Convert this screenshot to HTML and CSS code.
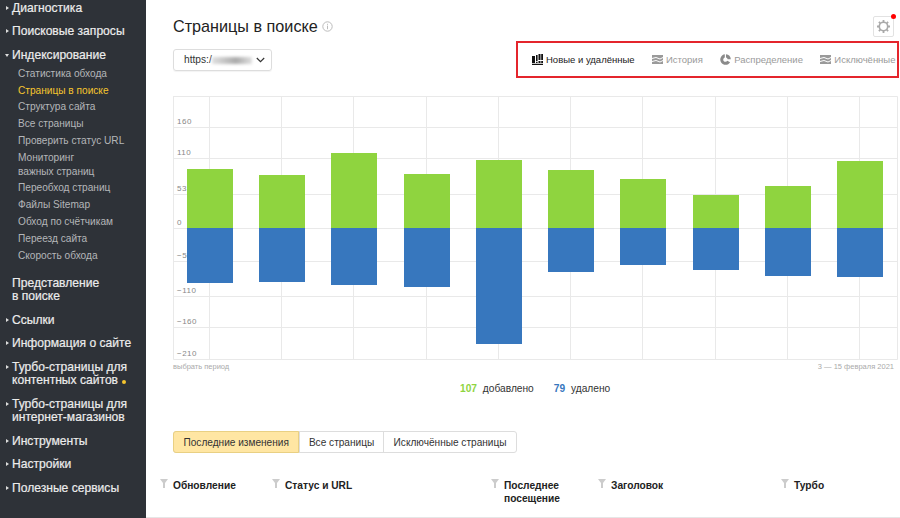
FILE: index.html
```html
<!DOCTYPE html>
<html>
<head>
    <title>Страницы в поиске</title>
    <link rel="stylesheet" href="styles.css">
</head>
<body>
    <nav class="sidebar">
        <ul class="nav">
            <li class="nav-item has-arrow">Диагностика</li>
            <li class="nav-item has-arrow">Поисковые запросы</li>
            <li class="nav-item has-arrow open">Индексирование
                <ul class="subnav">
                    <li>Статистика обхода</li>
                    <li class="active">Страницы в поиске</li>
                    <li>Структура сайта</li>
                    <li>Все страницы</li>
                    <li>Проверить статус URL</li>
                    <li>Мониторинг<br>важных страниц</li>
                    <li>Переобход страниц</li>
                    <li>Файлы Sitemap</li>
                    <li>Обход по счётчикам</li>
                    <li>Переезд сайта</li>
                    <li>Скорость обхода</li>
                </ul>
            </li>
            <li class="nav-item">Представление<br>в поиске</li>
            <li class="nav-item has-arrow">Ссылки</li>
            <li class="nav-item has-arrow">Информация о сайте</li>
            <li class="nav-item has-arrow">Турбо-страницы для<br>контентных сайтов <span class="dot"></span></li>
            <li class="nav-item has-arrow">Турбо-страницы для<br>интернет-магазинов</li>
            <li class="nav-item has-arrow">Инструменты</li>
            <li class="nav-item has-arrow">Настройки</li>
            <li class="nav-item has-arrow">Полезные сервисы</li>
        </ul>
    </nav>

    <main class="content">
        <div class="head">
            <h1>Страницы в поиске</h1>
            <svg class="info" width="11" height="11" viewBox="0 0 11 11">
                <circle cx="5.5" cy="5.5" r="4.7" fill="none" stroke="#bbb"/>
                <rect x="5" y="4.6" width="1" height="3.6" fill="#bbb"/>
                <rect x="5" y="2.8" width="1" height="1" fill="#bbb"/>
            </svg>
            <div class="gear">
                <svg width="15" height="15" viewBox="0 0 15 15">
                    <circle cx="7.5" cy="7.5" r="4.2" fill="none" stroke="#a9a9a9" stroke-width="1.6"/>
                    <path d="M7.5 1v2M7.5 12v2M1 7.5h2M12 7.5h2M2.9 2.9l1.4 1.4M10.7 10.7l1.4 1.4M2.9 12.1l1.4-1.4M10.7 4.3l1.4-1.4" stroke="#a9a9a9" stroke-width="1.8"/>
                </svg>
                <span class="gear-dot"></span>
            </div>
        </div>

        <div class="toolbar">
            <div class="select">
                <span>https:/</span>
                <span class="blurred"></span>
                <svg width="9" height="6" viewBox="0 0 9 6">
                    <path d="M.8 1l3.7 3.6L8.200 1" fill="none" stroke="#333" stroke-width="1.200"/>
                </svg>
            </div>
            <div class="views">
                <div class="view current">
                    <svg width="11" height="11" viewBox="0 0 11 11">
                        <path d="M0 2h3v7H0zM4 1h1.600v6H4zM4 7.800h1.600V9H4zM6.500 0h2v6h-2zM6.500 7h2v2h-2zM9.200 0H11v6H9.200zM9.200 7H11v2H9.200zM0 9.800h11V11H0z" fill="#111"/>
                    </svg>
                    Новые и удалённые
                </div>
                <div class="view">
                    <svg width="11" height="11" viewBox="0 0 11 11">
                        <path d="M0 1h11v2l-3 1.500L4 3 0 4zM0 5l4-1 4 1.500L11 4v2L8 7.500 4 6 0 7zM0 8l4-1 4 1.500L11 7v3H0z" fill="#9a9a9a"/>
                    </svg>
                    История
                </div>
                <div class="view">
                    <svg width="11" height="11" viewBox="0 0 11 11">
                        <path d="M4.800.3v3.200a2.200 2.200 0 1 0 2.500 3.300l2.800 1.500A5.300 5.300 0 1 1 4.800.3zM6 .3A5.300 5.300 0 0 1 10.800 5.200H7.600A2.200 2.200 0 0 0 6 3.500z" fill="#8a8a8a"/>
                    </svg>
                    Распределение
                </div>
                <div class="view">
                    <svg width="11" height="11" viewBox="0 0 11 11">
                        <path d="M0 1h11v2l-3 1.500L4 3 0 4zM0 5l4-1 4 1.500L11 4v2L8 7.500 4 6 0 7zM0 8l4-1 4 1.500L11 7v3H0z" fill="#9a9a9a"/>
                    </svg>
                    Исключённые
                </div>
            </div>
        </div>

        <svg class="chart" width="725" height="264" viewBox="173 96 725 264">
            <g class="grid">
                <path d="M173 96.500H897.500V359.500H173.500V96.500"/>
                <path d="M173 127.500H897M173 158.500H897M173 194.500H897M173 228.500H897M173 261.500H897M173 296.500H897M173 327.500H897"/>
                <path d="M209.500 96V359M281.500 96V359M353.500 96V359M426.500 96V359M498.500 96V359M570.500 96V359M642.500 96V359M715.500 96V359M787.500 96V359M859.500 96V359"/>
            </g>
            <g class="ticks">
                <text x="177" y="124">160</text>
                <text x="177" y="155">110</text>
                <text x="177" y="191">53</text>
                <text x="177" y="224.500">0</text>
                <text x="177" y="257.500">−53</text>
                <text x="177" y="293">−110</text>
                <text x="177" y="324">−160</text>
                <text x="177" y="356">−210</text>
            </g>
            <g class="added">
                <rect x="187" y="169" width="46" height="59"/>
                <rect x="259" y="175" width="46" height="53"/>
                <rect x="331" y="153" width="46" height="75"/>
                <rect x="404" y="174" width="46" height="54"/>
                <rect x="476" y="160" width="46" height="68"/>
                <rect x="548" y="170" width="46" height="58"/>
                <rect x="620" y="179" width="46" height="49"/>
                <rect x="693" y="195" width="46" height="33"/>
                <rect x="765" y="186" width="46" height="42"/>
                <rect x="837" y="161" width="46" height="67"/>
            </g>
            <g class="removed">
                <rect x="187" y="228" width="46" height="55"/>
                <rect x="259" y="228" width="46" height="54"/>
                <rect x="331" y="228" width="46" height="57"/>
                <rect x="404" y="228" width="46" height="59"/>
                <rect x="476" y="228" width="46" height="116"/>
                <rect x="548" y="228" width="46" height="44"/>
                <rect x="620" y="228" width="46" height="37"/>
                <rect x="693" y="228" width="46" height="42"/>
                <rect x="765" y="228" width="46" height="48"/>
                <rect x="837" y="228" width="46" height="49"/>
            </g>
        </svg>

        <div class="period">
            <span>выбрать период</span>
            <span>3 — 15 февраля 2021</span>
        </div>

        <div class="legend">
            <span><b class="num-added">107</b> добавлено</span>
            <span><b class="num-removed">79</b> удалено</span>
        </div>

        <div class="tabs">
            <div class="tab selected">Последние изменения</div>
            <div class="tab">Все страницы</div>
            <div class="tab">Исключённые страницы</div>
        </div>

        <div class="table-head">
            <div class="col"><svg class="funnel" viewBox="0 0 8 9"><path d="M0 0h8L5 4v5H3V4z"/></svg><span>Обновление</span></div>
            <div class="col"><svg class="funnel" viewBox="0 0 8 9"><path d="M0 0h8L5 4v5H3V4z"/></svg><span>Статус и URL</span></div>
            <div class="col"><svg class="funnel" viewBox="0 0 8 9"><path d="M0 0h8L5 4v5H3V4z"/></svg><span>Последнее<br>посещение</span></div>
            <div class="col"><svg class="funnel" viewBox="0 0 8 9"><path d="M0 0h8L5 4v5H3V4z"/></svg><span>Заголовок</span></div>
            <div class="col"><svg class="funnel" viewBox="0 0 8 9"><path d="M0 0h8L5 4v5H3V4z"/></svg><span>Турбо</span></div>
        </div>
    </main>
</body>
</html>
```

FILE: styles.css
```css
* {
    box-sizing: border-box;
}

html, body {
    height: 518px;
    overflow: hidden;
}

body {
    margin: 0;
    display: flex;
    font-family: "Liberation Sans", Arial, sans-serif;
    background: #fff;
    color: #222;
}

/* sidebar */
.sidebar {
    width: 146px;
    flex: none;
    background: #2e3238;
    padding-top: 1.5px;
}

.nav, .subnav {
    list-style: none;
    margin: 0;
    padding: 0;
}

.nav-item {
    position: relative;
    margin-bottom: 10px;
    padding-left: 12px;
    font-size: 12.100px;
    line-height: 13.500px;
    color: #ececec;
    -webkit-text-stroke: 0.2px #ececec;
    white-space: nowrap;
}

.nav-item.open {
    margin-bottom: 12.600px;
}

.has-arrow::before {
    content: "";
    position: absolute;
    left: 6px;
    top: 4px;
    border-left: 3px solid #ddd;
    border-top: 2.5px solid transparent;
    border-bottom: 2.5px solid transparent;
}

.open::before {
    left: 4.5px;
    top: 5px;
    border-top: 3px solid #ddd;
    border-left: 2.5px solid transparent;
    border-right: 2.5px solid transparent;
    border-bottom: 0;
}

.dot {
    display: inline-block;
    width: 4px;
    height: 4px;
    margin-left: 1px;
    border-radius: 50%;
    background: #f5c52e;
    vertical-align: 0;
}

.subnav {
    margin: 3.400px 0 0 -12px;
    padding-left: 18px;
    font-size: 10.150px;
    -webkit-text-stroke: 0;
    color: #b4b6b8;
}

.subnav li {
    padding: 1.4px 0;
    line-height: 14px;
}

.subnav .active {
    color: #f5c52e;
}

/* main column */
.content {
    flex: 1;
    min-width: 0;
    padding-left: 27px;
}

.head {
    display: flex;
    align-items: center;
    padding: 16px 6px 0 0;
}

h1 {
    margin: 0;
    font-size: 16.200px;
    line-height: 21px;
    font-weight: normal;
    color: #222;
}

.info {
    margin-left: 4px;
}

.gear {
    position: relative;
    width: 21px;
    height: 21px;
    margin-left: auto;
    display: flex;
    align-items: center;
    justify-content: center;
    border: 1px solid #e2e2e2;
    border-radius: 2px;
}

.gear-dot {
    position: absolute;
    top: -3px;
    right: -3px;
    width: 5px;
    height: 5px;
    border-radius: 50%;
    background: #f00;
}

.toolbar {
    display: flex;
    justify-content: space-between;
    align-items: center;
    margin: 4px 1px 0 0;
}

.select {
    display: flex;
    align-items: center;
    width: 99px;
    height: 22px;
    padding-left: 10px;
    font-size: 10.200px;
    color: #333;
    border: 1px solid #ddd;
    border-radius: 3px;
    box-shadow: 0 1px 1px rgba(0, 0, 0, 0.05);
}

.blurred {
    width: 40px;
    height: 7px;
    margin: 1px 4px 0 0;
    background: linear-gradient(to right, #e0e0e0, #bdbdbd 40%, #aaa 60%, #e0e0e0);
    filter: blur(1.5px);
}

.views {
    display: flex;
    height: 37px;
    width: 383px;
    padding-left: 14px;
    gap: 17.400px;
    align-items: center;
    border: 2px solid #e4252c;
    font-size: 9.500px;
    color: #9a9a9a;
}

.view {
    display: flex;
    align-items: center;
    gap: 3px;
    white-space: nowrap;
}

.view.current {
    color: #222;
}

/* chart */
.chart {
    display: block;
    margin-top: 18px;
}

.grid path {
    fill: none;
    stroke: #e9e9e9;
    stroke-width: 1;
}

.ticks text {
    font-size: 8px;
    letter-spacing: 0.5px;
    fill: #888;
}

.added rect {
    fill: #8fd43f;
}

.removed rect {
    fill: #3777be;
}

.period {
    display: flex;
    justify-content: space-between;
    padding-right: 6px;
    margin-top: 2px;
    font-size: 7.500px;
    line-height: 10px;
    color: #aaa;
}

.legend {
    display: flex;
    gap: 20px;
    margin: 10px 0 0 287px;
    font-size: 10.200px;
    line-height: 14px;
    color: #333;
}

.legend b {
    margin-right: 3px;
}

.num-added {
    color: #8fd43f;
}

.num-removed {
    color: #3777be;
}

.tabs {
    display: flex;
    width: fit-content;
    margin-top: 35px;
    height: 22px;
    font-size: 10.100px;
    color: #333;
    border: 1px solid #ddd;
    border-radius: 3px;
}

.tab {
    display: flex;
    align-items: center;
    padding: 0 9.200px;
    border-left: 1px solid #ddd;
}

.tab:first-child {
    border-left: 0;
}

.tab.selected {
    background: #ffe6a3;
    margin: -1px 0 -1px -1px;
    padding: 0 8.800px 0 9.500px;
    border: 1px solid #e9d083;
    border-radius: 3px 0 0 3px;
}

.table-head {
    display: grid;
    grid-template-columns: 112px 219px 107px 183px 1fr;
    height: 65px;
    margin-left: -27px;
    padding: 26px 0 0 14px;
    font-size: 10.200px;
    font-weight: bold;
    line-height: 13px;
    color: #222;
    border-bottom: 1px solid #e6e6e6;
}

.col {
    display: flex;
    align-items: flex-start;
}

.funnel {
    flex: none;
    width: 8px;
    height: 9px;
    margin-right: 5px;
    fill: #ccc;
}
```
